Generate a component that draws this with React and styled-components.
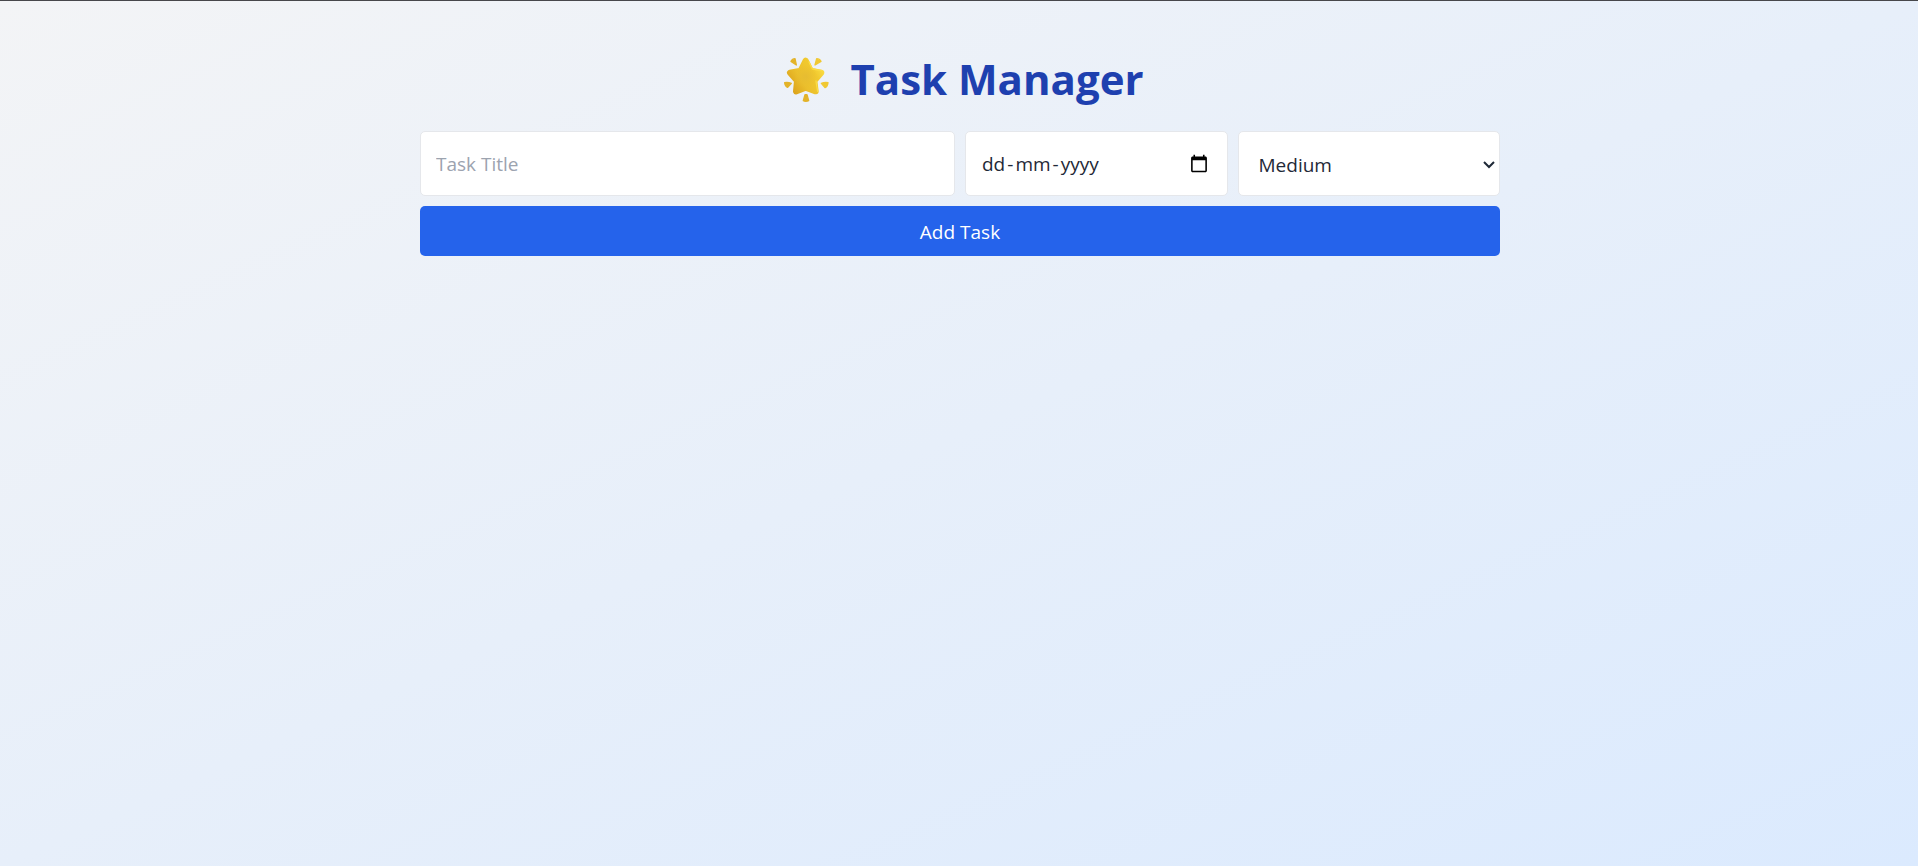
import React, { useState } from "react";
import styled, { createGlobalStyle } from "styled-components";

const GlobalStyle = createGlobalStyle`
  *, *::before, *::after { box-sizing: border-box; }
  body {
    margin: 0;
    font-family: "Segoe UI", "Open Sans", "Noto Sans", sans-serif;
    color: #1f2937;
  }
`;

const Page = styled.main`
  min-height: 100vh;
  padding: 49px 20px 40px 22px;
  border-top: 1px solid #47474b;
  background: linear-gradient(to bottom right, #f3f4f6, #dbeafe);
`;

const Container = styled.div`
  max-width: 1080px;
  margin: 0 auto;
`;

const Title = styled.h1`
  display: flex;
  align-items: flex-start;
  justify-content: center;
  gap: 14px;
  margin: 0 0 21px;
  font-size: 42px;
  line-height: 58px;
  font-weight: 700;
  color: #1e40af;
`;

const Star = styled.svg`
  width: 60px;
  height: 60px;
  flex: none;
`;

const Form = styled.form`
  display: grid;
  grid-template-columns: repeat(4, minmax(0, 1fr));
  gap: 10px;
`;

const Field = styled.label`
  position: relative;
  display: block;
  grid-column: span ${(p) => p.$span || 1};
`;

const controlStyles = `
  display: block;
  width: 100%;
  height: 65px;
  padding: 15px;
  border: 1px solid #e5e7eb;
  border-radius: 5px;
  background-color: #fff;
  color: #1f2937;
  font-family: inherit;
  font-size: 19px;
  line-height: 30px;
`;

const TextInput = styled.input`
  ${controlStyles}
  &::placeholder { color: #9ca3af; opacity: 1; }
`;

const DateInput = styled.input`
  ${controlStyles}
  padding-right: 18px;
  &::-webkit-datetime-edit { opacity: ${(p) => (p.$empty ? 0 : 1)}; }
  &::-webkit-calendar-picker-indicator {
    width: 20px;
    height: 20px;
    padding: 0;
  }
`;

const DateHint = styled.span`
  position: absolute;
  top: 18px;
  left: 17px;
  display: flex;
  gap: 2px;
  font-size: 19px;
  line-height: 30px;
  pointer-events: none;
`;

const Select = styled.select`
  ${controlStyles}
  appearance: none;
  padding: 17px 30px 15px 20px;
`;

const Chevron = styled.svg`
  position: absolute;
  top: 24px;
  right: 2px;
  width: 18px;
  height: 18px;
  pointer-events: none;
`;

const AddButton = styled.button`
  grid-column: 1 / -1;
  height: 50px;
  padding: 11px 20px 9px;
  border: 0;
  border-radius: 5px;
  background: #2563eb;
  color: #fff;
  font-family: inherit;
  font-size: 19px;
  line-height: 30px;
  cursor: pointer;
`;

function GlowingStar() {
  return (
    <Star viewBox="21 30 180 180" aria-hidden="true">
      <defs>
        <linearGradient id="starFill" x1="0" y1="0.8" x2="1" y2="0.2">
          <stop offset="0" stopColor="#dda51d" />
          <stop offset="0.35" stopColor="#ebbf2c" />
          <stop offset="0.75" stopColor="#f1c92f" />
          <stop offset="1" stopColor="#fadb42" />
        </linearGradient>
        <radialGradient id="starCore">
          <stop offset="0" stopColor="#e6bc32" />
          <stop offset="1" stopColor="#e9be2e" stopOpacity="0" />
        </radialGradient>
      </defs>
      <path
        d="M110 62 L125 92 L157 98 L136 122 L140 154 L110 143 L81 154 L84 122 L63 98 L95 92 Z"
        fill="url(#starFill)"
        stroke="url(#starFill)"
        strokeWidth="18"
        strokeLinejoin="round"
      />
      <path d="M120 66 L130 87 L159 92" fill="none" stroke="#fbdc43" strokeWidth="4" strokeLinecap="round" strokeLinejoin="round" />
      <path d="M146 154 L141 123" fill="none" stroke="#fbdc43" strokeWidth="4" strokeLinecap="round" />
      <circle cx="110" cy="110" r="35" fill="url(#starCore)" />
      <g fill="#e3b329" stroke="#e3b329" strokeWidth="4" strokeLinejoin="round">
        <path d="M66 64 Q70 56 78 56 L82 75 Z" />
        <path d="M47 128 Q55 125 67 130 L56 142 Q48 139 47 128 Z" />
        <path d="M108 164 L114 164 L119 182 Q110 186 103 182 Z" />
      </g>
      <g fill="#f0c832" stroke="#f0c832" strokeWidth="4" strokeLinejoin="round">
        <path d="M143 56 Q152 56 156 64 L138 75 Z" />
        <path d="M157 130 Q169 125 177 128 Q176 139 168 143 Z" />
      </g>
    </Star>
  );
}

export default function App() {
  const [title, setTitle] = useState("");
  const [date, setDate] = useState("");
  const [priority, setPriority] = useState("Medium");

  return (
    <>
      <GlobalStyle />
      <Page>
        <Container>
          <Title>
            <GlowingStar />
            Task Manager
          </Title>
          <Form onSubmit={(e) => e.preventDefault()}>
            <Field $span={2}>
              <TextInput
                type="text"
                placeholder="Task Title"
                aria-label="Task Title"
                value={title}
                onChange={(e) => setTitle(e.target.value)}
              />
            </Field>
            <Field>
              <DateInput
                type="date"
                aria-label="Due date"
                value={date}
                $empty={!date}
                onChange={(e) => setDate(e.target.value)}
              />
              {!date && (
                <DateHint>
                  <span>dd</span>
                  <span>-</span>
                  <span>mm</span>
                  <span>-</span>
                  <span>yyyy</span>
                </DateHint>
              )}
            </Field>
            <Field>
              <Select
                aria-label="Priority"
                value={priority}
                onChange={(e) => setPriority(e.target.value)}
              >
                <option>Low</option>
                <option>Medium</option>
                <option>High</option>
              </Select>
              <Chevron viewBox="0 0 18 18" aria-hidden="true">
                <path d="M4 7 L9 12 L14 7" fill="none" stroke="#1f2937" strokeWidth="2" />
              </Chevron>
            </Field>
            <AddButton type="submit">Add Task</AddButton>
          </Form>
        </Container>
      </Page>
    </>
  );
}
